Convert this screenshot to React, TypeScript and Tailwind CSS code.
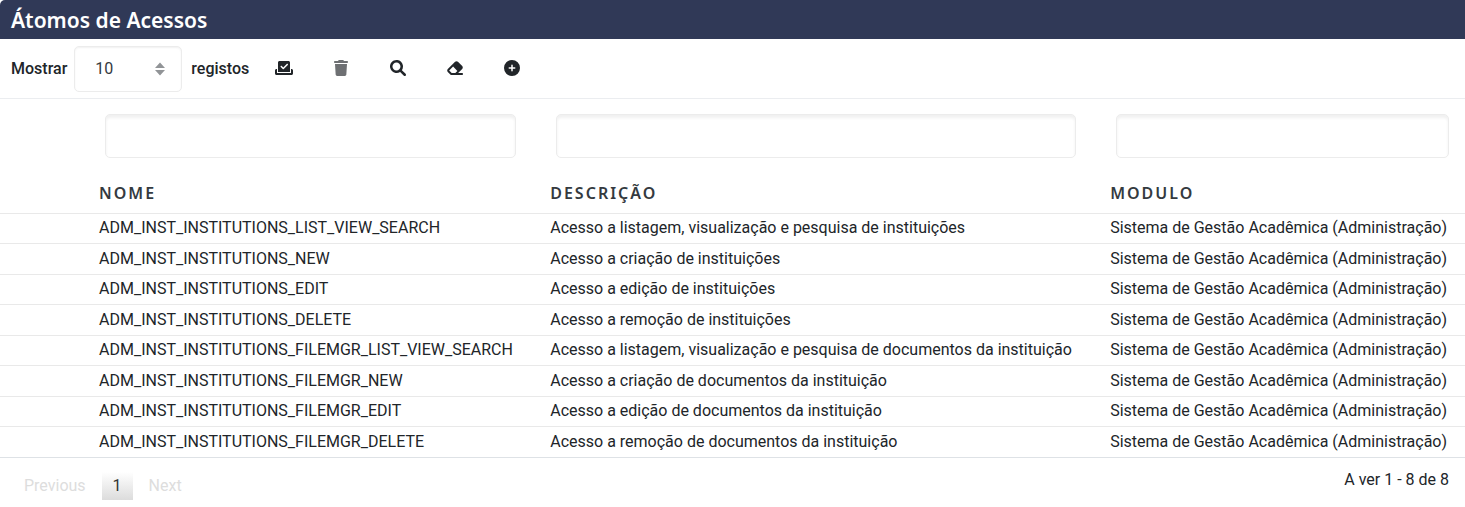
import React, { useState } from "react";
import type { SVGProps } from "react";
import { FaCheckToSlot, FaCirclePlus, FaEraser, FaTrash } from "react-icons/fa6";

const modulo = "Sistema de Gestão Acadêmica (Administração)";

const rows = [
  { nome: "ADM_INST_INSTITUTIONS_LIST_VIEW_SEARCH", descricao: "Acesso a listagem, visualização e pesquisa de instituições" },
  { nome: "ADM_INST_INSTITUTIONS_NEW", descricao: "Acesso a criação de instituições" },
  { nome: "ADM_INST_INSTITUTIONS_EDIT", descricao: "Acesso a edição de instituições" },
  { nome: "ADM_INST_INSTITUTIONS_DELETE", descricao: "Acesso a remoção de instituições" },
  { nome: "ADM_INST_INSTITUTIONS_FILEMGR_LIST_VIEW_SEARCH", descricao: "Acesso a listagem, visualização e pesquisa de documentos da instituição" },
  { nome: "ADM_INST_INSTITUTIONS_FILEMGR_NEW", descricao: "Acesso a criação de documentos da instituição" },
  { nome: "ADM_INST_INSTITUTIONS_FILEMGR_EDIT", descricao: "Acesso a edição de documentos da instituição" },
  { nome: "ADM_INST_INSTITUTIONS_FILEMGR_DELETE", descricao: "Acesso a remoção de documentos da instituição" },
];

const columns = ["Nome", "Descrição", "Modulo"];

function SearchIcon(props: SVGProps<SVGSVGElement>) {
  return (
    <svg viewBox="0 0 512 512" fill="currentColor" {...props}>
      <path d="M500.3 443.7l-119.7-119.7c27.22-40.41 40.65-90.9 33.46-144.7C401.8 87.79 326.8 13.32 235.2 1.723C99.01-15.51-15.51 99.01 1.724 235.2c11.6 91.64 86.08 166.7 177.6 178.9c53.8 7.189 104.3-6.236 144.7-33.46l119.7 119.7c15.62 15.62 40.95 15.62 56.57 0C515.9 484.7 515.9 459.3 500.3 443.7zM79.1 208c0-70.58 57.42-128 128-128s128 57.42 128 128c0 70.58-57.42 128-128 128S79.1 278.6 79.1 208z" />
    </svg>
  );
}

const actions = [
  { label: "Selecionar", Icon: FaCheckToSlot, disabled: false },
  { label: "Remover", Icon: FaTrash, disabled: true },
  { label: "Pesquisar", Icon: SearchIcon, disabled: false },
  { label: "Limpar", Icon: FaEraser, disabled: false },
  { label: "Adicionar", Icon: FaCirclePlus, disabled: false },
];

function Toolbar() {
  const [size, setSize] = useState("10");
  return (
    <div className="flex items-center border-b border-[#ebedf0] pt-[7px] pb-[6px] pl-[11px]">
      <label htmlFor="page-size" className="font-medium">Mostrar</label>
      <span className="relative mr-[9px] ml-[7px]">
        <select
          id="page-size"
          value={size}
          onChange={(e) => setSize(e.target.value)}
          className="h-[46px] w-[108px] appearance-none rounded-[5px] border border-[#ececec] bg-white pl-5 text-[#343a40] shadow-[inset_0_1px_2px_rgba(0,0,0,0.06)]"
        >
          <option>10</option>
          <option>25</option>
          <option>50</option>
          <option>100</option>
        </select>
        <svg viewBox="0 0 10 14" className="pointer-events-none absolute top-4 right-[17px] h-[14px] w-[10px] fill-[#919497]" aria-hidden="true">
          <path d="M5 0.5 10 6H0ZM0 8h10L5 13.5Z" />
        </svg>
      </span>
      <span className="font-medium">registos</span>
      <div className="ml-[6px] flex pb-[2px]">
        {actions.map(({ label, Icon, disabled }) => (
          <button key={label} type="button" aria-label={label} disabled={disabled} className="flex h-10 w-[57px] items-center justify-center disabled:opacity-65">
            <Icon className="h-4 w-[18px]" aria-hidden="true" />
          </button>
        ))}
      </div>
    </div>
  );
}

function AccessTable() {
  return (
    <table className="w-full table-fixed border-collapse text-left whitespace-nowrap">
      <colgroup>
        <col className="w-[6.35%]" />
        <col className="w-[30.8%]" />
        <col className="w-[38.22%]" />
        <col />
      </colgroup>
      <thead>
        <tr>
          <td />
          {columns.map((name) => (
            <td key={name} className="pt-[15px] pr-7 pl-3 align-top last:pr-4">
              <input
                type="text"
                aria-label={name}
                className="block h-11 w-full rounded-[5px] border border-[#ececec] bg-white px-3 shadow-[inset_0_3px_3px_rgba(0,0,0,0.06)]"
              />
            </td>
          ))}
        </tr>
        <tr>
          <td />
          {columns.map((name) => (
            <th key={name} scope="col" className="h-[55px] px-[6px] pt-[15px] font-['Noto_Sans',sans-serif] font-semibold tracking-[2px] text-[#343a40] uppercase">
              {name}
            </th>
          ))}
        </tr>
      </thead>
      <tbody>
        {rows.map((row) => (
          <tr key={row.nome} className="odd:h-[30px] even:h-[31px]">
            <td className="border-t border-[#e9e9e9]" />
            <td className="border-t border-[#e9e9e9] px-[6px]">{row.nome}</td>
            <td className="border-t border-[#e9e9e9] px-[6px]">{row.descricao}</td>
            <td className="border-t border-[#e9e9e9] px-[6px]">{modulo}</td>
          </tr>
        ))}
      </tbody>
    </table>
  );
}

function Footer() {
  return (
    <div className="flex justify-between border-t border-[#dee2e6] pr-4 pl-3">
      <nav aria-label="Paginação" className="flex pt-[14px] text-[#dddddd]">
        <button type="button" disabled className="px-3">Previous</button>
        <button type="button" aria-current="page" className="mx-1 h-7 bg-linear-to-b from-white to-[#dcdcdc] px-[11px] text-[#333333]">1</button>
        <button type="button" disabled className="px-3">Next</button>
      </nav>
      <p className="pt-[10px]">A ver 1 - 8 de 8</p>
    </div>
  );
}

export default function App() {
  return (
    <main className="bg-white font-['Roboto',sans-serif] text-base text-[#212529]">
      <h1 className="rounded-tl-[5px] bg-[#303957] pt-[6px] pb-[5px] pl-[11px] font-['Noto_Sans',sans-serif] text-[21px] leading-7 font-semibold text-white">
        Átomos de Acessos
      </h1>
      <Toolbar />
      <AccessTable />
      <Footer />
    </main>
  );
}
